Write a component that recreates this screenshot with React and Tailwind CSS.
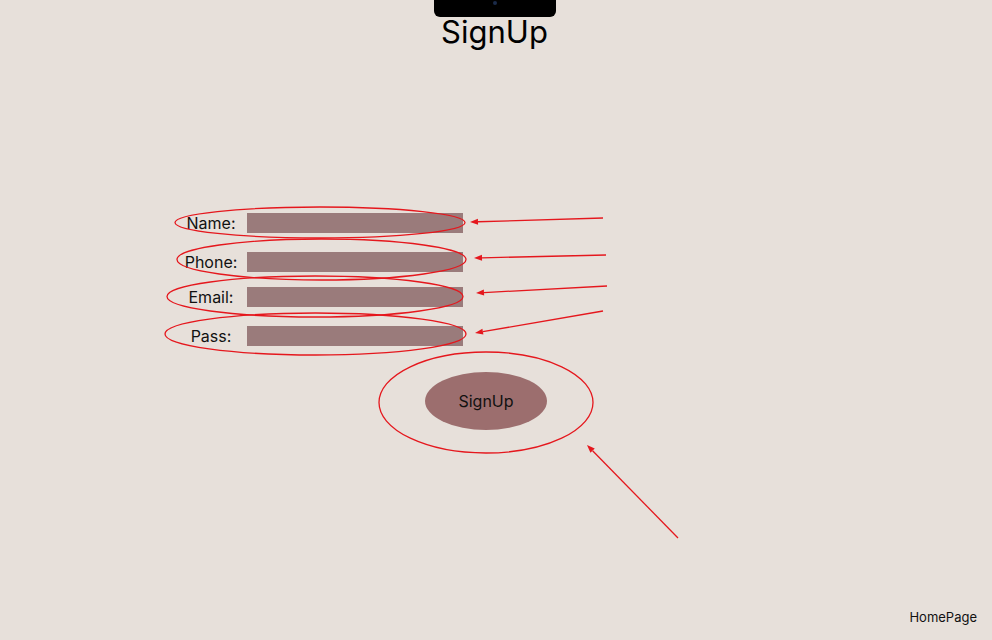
import React from 'react';

const fields = [
    { label: 'Name:', gap: 'mt-0' },
    { label: 'Phone:', gap: 'mt-[19px]' },
    { label: 'Email:', gap: 'mt-[15px]' },
    { label: 'Pass:', gap: 'mt-[19px]' },
];

// red review marks drawn over the form
const rings = [
    { cx: 320, cy: 222.5, rx: 145, ry: 15.5 },
    { cx: 321.5, cy: 259.5, rx: 144.5, ry: 20.5 },
    { cx: 315, cy: 296.5, rx: 148, ry: 20.5 },
    { cx: 315.5, cy: 334, rx: 150.5, ry: 21 },
    { cx: 486, cy: 402.5, rx: 107, ry: 50.5 },
];

const arrows = [
    [603, 218, 470, 222],
    [606, 255, 474, 258],
    [607, 286, 476, 293],
    [603, 311, 475, 333],
    [678, 538, 587, 445],
];

function Arrow({ x1, y1, x2, y2 }) {
    const a = Math.atan2(y1 - y2, x1 - x2);
    const len = 8;
    const w = 3;
    const bx = x2 + Math.cos(a) * len;
    const by = y2 + Math.sin(a) * len;
    const px = -Math.sin(a) * w;
    const py = Math.cos(a) * w;
    return (
        <g>
            <line x1={x1} y1={y1} x2={bx} y2={by} stroke="#e5171d" strokeWidth="1.3" />
            <polygon points={`${x2},${y2} ${bx + px},${by + py} ${bx - px},${by - py}`} fill="#e5171d" />
        </g>
    );
}

function Field({ label, gap }) {
    return (
        <div className={`flex items-center h-[20px] ${gap}`}>
            <label className="w-[72px] text-center text-[16px] text-[#111]">{label}</label>
            <input type="text" className="w-[216px] h-[20px] bg-[#9a7b7b] outline-none border-0" />
        </div>
    );
}

export default function App() {
    return (
        <div className="relative h-[640px] w-full bg-[#e7e0da] flex flex-col items-center overflow-hidden font-['Inter','Liberation_Sans',sans-serif]">
            <div className="w-[122px] h-[17px] -ml-[2px] bg-black rounded-b-md flex justify-center">
                <div className="w-[4px] h-[4px] rounded-full bg-[#1b2b4a] mt-[1px]"></div>
            </div>
            <h1 className="text-[31px] leading-[36px] -mt-[3px] -ml-[3px] text-black">SignUp</h1>

            <form className="self-start ml-[175px] mt-[163px] flex flex-col">
                {fields.map((f) => (
                    <Field key={f.label} label={f.label} gap={f.gap} />
                ))}
            </form>

            <button className="self-start ml-[425px] mt-[26px] w-[122px] h-[58px] rounded-[50%] bg-[#9c6e6e] text-[16px] text-[#111]">
                SignUp
            </button>

            <a href="#" className="mt-auto self-end mr-[15px] mb-[13px] text-[13px] text-[#111]">HomePage</a>

            <svg className="absolute inset-0 pointer-events-none" width="992" height="640" viewBox="0 0 992 640">
                {rings.map((r, i) => (
                    <ellipse key={i} cx={r.cx} cy={r.cy} rx={r.rx} ry={r.ry} fill="none" stroke="#e5171d" strokeWidth="1.3" />
                ))}
                {arrows.map(([x1, y1, x2, y2], i) => (
                    <Arrow key={i} x1={x1} y1={y1} x2={x2} y2={y2} />
                ))}
            </svg>
        </div>
    );
}
